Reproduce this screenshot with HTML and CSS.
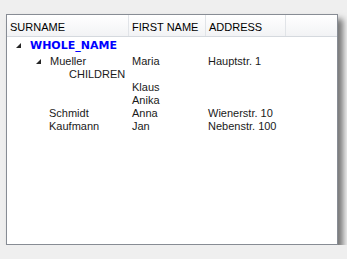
FILE: index.html
```html
<!DOCTYPE html>
<html lang="en">
<head>
    <meta charset="UTF-8">
    <title>Tree List</title>
    <link rel="stylesheet" href="styles.css">
</head>
<body>

    <div class="tree-panel">
        <div class="tree-header">
            <div class="col col-surname">SURNAME</div>
            <div class="col col-first">FIRST NAME</div>
            <div class="col col-address">ADDRESS</div>
            <div class="col col-rest"></div>
        </div>

        <div class="tree-body">
            <div class="row row-group">
                <div class="cell cell-surname level-0">
                    <span class="toggle"></span>
                    <span class="group-name">WHOLE_NAME</span>
                </div>
                <div class="cell"></div>
                <div class="cell"></div>
            </div>
            <div class="row">
                <div class="cell cell-surname level-1">
                    <span class="toggle"></span>
                    <span>Mueller</span>
                </div>
                <div class="cell">Maria</div>
                <div class="cell">Hauptstr. 1</div>
            </div>
            <div class="row">
                <div class="cell cell-surname level-2">
                    <span>CHILDREN</span>
                </div>
                <div class="cell"></div>
                <div class="cell"></div>
            </div>
            <div class="row">
                <div class="cell cell-surname"></div>
                <div class="cell">Klaus</div>
                <div class="cell"></div>
            </div>
            <div class="row">
                <div class="cell cell-surname"></div>
                <div class="cell">Anika</div>
                <div class="cell"></div>
            </div>
            <div class="row">
                <div class="cell cell-surname level-1 no-toggle">
                    <span>Schmidt</span>
                </div>
                <div class="cell">Anna</div>
                <div class="cell">Wienerstr. 10</div>
            </div>
            <div class="row">
                <div class="cell cell-surname level-1 no-toggle">
                    <span>Kaufmann</span>
                </div>
                <div class="cell">Jan</div>
                <div class="cell">Nebenstr. 100</div>
            </div>
        </div>
    </div>

</body>
</html>
```

FILE: styles.css
```css
body {
    margin: 0;
    padding: 14px 0 0 6px;
    background-color: #efefef;
    font-family: Tahoma, "Liberation Sans", Arial, sans-serif;
    font-size: 11px;
    color: #1a1a1a;
}

.tree-panel {
    width: 330px;
    height: 229px;
    background-color: #fff;
    border: 1px solid #878c94;
    box-shadow: 5px 5px 6px rgba(0, 0, 0, 0.5);
}

.tree-header {
    display: grid;
    grid-template-columns: 122px 77px 80px 1fr;
    height: 21px;
    background: linear-gradient(#ffffff, #f2f3f5);
    border-bottom: 1px solid #d5d9de;
}

.col {
    display: flex;
    align-items: center;
    padding: 2px 0 0 3px;
    border-right: 1px solid #e1e4e8;
    color: #000;
}

.col-rest {
    border-right: none;
}

.tree-body {
    padding-top: 1px;
}

.row {
    display: grid;
    grid-template-columns: 122px 76px 80px;
    height: 13px;
    line-height: 13px;
    padding-top: 1px;
    margin-bottom: -1px;
}

.row-group {
    height: 15px;
    line-height: 15px;
    padding-top: 0;
    margin-bottom: 1px;
}

.cell {
    padding-left: 3px;
    white-space: nowrap;
}

.cell-surname {
    display: flex;
    align-items: center;
}

.level-0 {
    padding-left: 9px;
}

.level-1 {
    padding-left: 29px;
}

.level-1.no-toggle {
    padding-left: 42px;
}

.level-2 {
    padding-left: 62px;
}

.toggle {
    width: 0;
    height: 0;
    margin-right: 9px;
    border-left: 5px solid transparent;
    border-bottom: 5px solid #262626;
}

.group-name {
    font-family: "DejaVu Sans", Verdana, sans-serif;
    font-weight: bold;
    font-size: 11px;
    color: #0000ff;
}
```
